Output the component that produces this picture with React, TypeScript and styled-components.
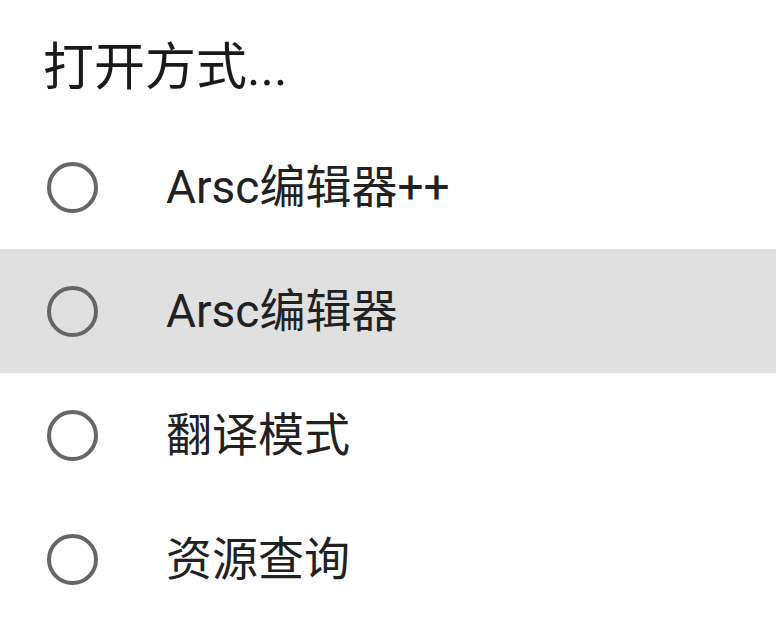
import React from "react";
import styled, { createGlobalStyle } from "styled-components";

const Global = createGlobalStyle`
  html, body { margin: 0; padding: 0; background: #ffffff; }
  body { font-family: Roboto, "Noto Sans CJK SC", sans-serif; }
`;

const Dialog = styled.div`
  width: 776px;
  height: 634px;
  background: #ffffff;
  display: flex;
  flex-direction: column;
`;

const Title = styled.div`
  height: 125px;
  display: flex;
  align-items: center;
  padding-left: 43px;
  padding-bottom: 0;
  box-sizing: border-box;
  font-size: 51px;
  color: #1a1a1a;
  font-family: Roboto, "Noto Sans CJK SC", sans-serif;
`;

const List = styled.div`
  display: flex;
  flex-direction: column;
`;

const Row = styled.div<{ $active?: boolean }>`
  height: 124px;
  display: flex;
  align-items: center;
  padding-left: 47px;
  gap: 68px;
  background: ${(p) => (p.$active ? "#e0e0e0" : "transparent")};
`;

const Radio = styled.span`
  width: 51px;
  height: 51px;
  box-sizing: border-box;
  border: 4.5px solid #666666;
  border-radius: 50%;
  flex-shrink: 0;
`;

const Label = styled.span`
  font-size: 46px;
  color: #212121;
  line-height: 1;
  font-family: Roboto, "Noto Sans CJK SC", sans-serif;
`;

const items = ["Arsc编辑器++", "Arsc编辑器", "翻译模式", "资源查询"];

export default function App() {
  return (
    <Dialog>
      <Global />
      <Title>打开方式...</Title>
      <List>
        {items.map((t, i) => (
          <Row key={t} $active={i === 1}>
            <Radio />
            <Label>{t}</Label>
          </Row>
        ))}
      </List>
    </Dialog>
  );
}
